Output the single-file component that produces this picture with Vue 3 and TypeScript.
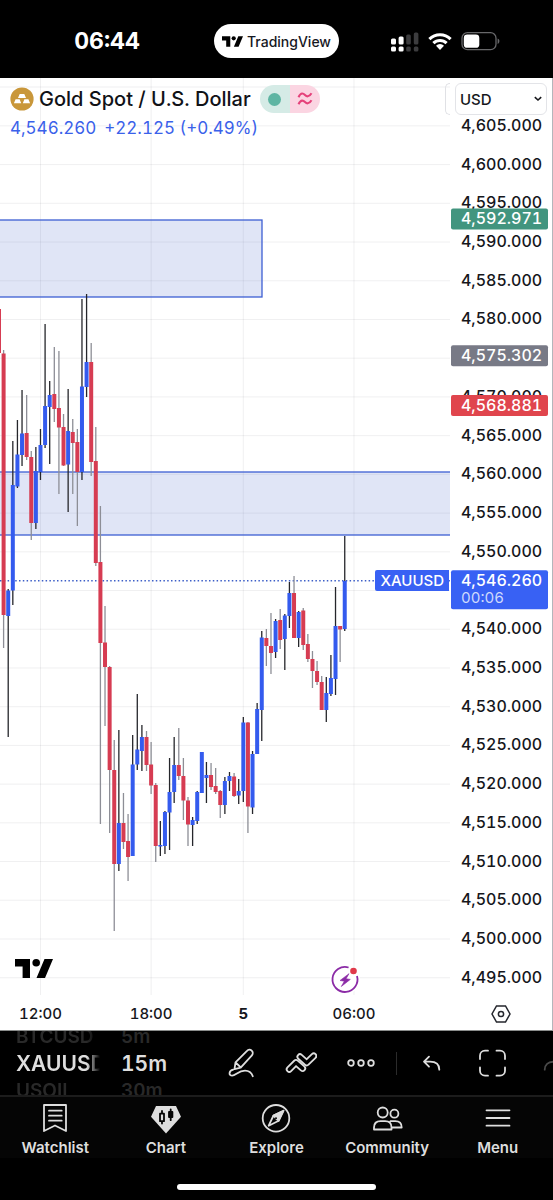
<script setup lang="ts">
import { ref } from 'vue'

type Candle = [high: number, bodyTop: number, bodyBottom: number, low: number, up: 0 | 1]

const currency = ref('USD')

// The plot starts below the status bar; vertical values are measured from the screen top.
const plotTop = 78
const priceToY = (price: number): number => 551.8 - (price - 4550) * 7.744 - plotTop

const firstX = 3.6
const step = 4.61
const candleX = (index: number): number => firstX + step * index

const candles: Candle[] = [
  [350, 353.5, 615, 648, 0], [589, 590.5, 616, 737, 1], [441, 485, 590.5, 605, 1], [420, 454.5, 486.5, 488, 1],
  [390, 433.5, 455, 466, 1], [395, 433, 457, 460, 0], [451, 457, 523, 540, 0], [447, 471, 523, 529, 1],
  [429, 445, 472, 480, 1], [324, 406, 445, 448, 1], [381, 395, 407, 464, 1], [347, 394, 409, 422, 0],
  [351, 408, 427.5, 494, 0], [414, 427, 465.5, 466, 0], [389, 431, 464.5, 512, 1], [419, 432, 443, 494, 0],
  [429, 442, 472, 526, 0], [299, 386.5, 472, 480, 1], [294, 362, 387, 397, 1], [343, 362, 462, 476, 0],
  [427, 461, 563, 566, 0], [506, 562, 643, 824, 0], [606, 642.5, 667, 726, 0], [666, 667, 770, 833, 0],
  [740, 770, 864, 931, 0], [730, 823, 864, 871, 1], [793, 823, 842, 849, 0], [814, 841, 857, 881, 0],
  [735, 764.5, 856, 856, 1], [694, 749.5, 764.5, 770, 1], [725, 737, 751, 771, 1], [731, 737, 765, 771, 0],
  [742, 764.5, 785.5, 794, 0], [783, 785, 846, 862, 0], [821, 845, 846.5, 856, 1], [811, 812, 846, 854, 1],
  [758, 792, 812.5, 850, 1], [737, 765, 792, 803, 1], [728, 765, 776, 780, 0], [758, 776, 800.5, 820, 0],
  [797, 800.5, 824.5, 846, 0], [817, 820, 825, 846, 1], [791, 792, 821, 824, 1], [752, 752, 793, 793, 1],
  [762, 775, 778, 803, 1], [763, 775, 787, 790, 0], [768, 786, 792, 794, 0], [790, 791, 805, 818, 0],
  [777, 781, 805, 814, 1], [772, 776, 781, 791, 1], [773, 776.5, 796, 797, 0], [779, 791, 795.5, 804, 1],
  [717, 722.5, 791, 802, 1], [722, 722.5, 806.5, 833, 0], [751, 754, 807.5, 814, 1], [703, 709, 754, 754, 1],
  [631, 637.5, 710, 741, 1], [629, 638, 646, 666, 0], [613, 646, 653, 674, 0], [619, 621, 652, 658, 1],
  [609, 620, 640, 649, 0], [614, 615.5, 639, 670, 1], [582, 593, 616, 628, 1], [576, 593, 638, 638, 0],
  [611, 612, 638, 647, 1], [608, 610.5, 645, 650, 0], [634, 644, 659, 662, 0], [651, 659, 671, 688, 0],
  [661, 671, 682, 685, 0], [676, 682, 710, 710, 0], [677, 693, 710, 722, 1], [655, 678, 694, 696, 1],
  [587, 626, 679, 695, 1], [626, 626, 629.5, 662, 0], [536, 581, 629, 631, 1],
]

const prices: number[] = Array.from({ length: 23 }, (_, i) => 4605 - i * 5)
// The 4,545 label is left out: the last-price badge takes its place.
const last = 4546.26
const labels = prices.filter((p) => p !== 4575 && p !== 4545)
const format = (value: number): string =>
  value.toLocaleString('en-US', { minimumFractionDigits: 3, maximumFractionDigits: 3 })

const times = [
  { label: '12:00', index: 8, bold: false },
  { label: '18:00', index: 32, bold: false },
  { label: '5', index: 52, bold: true },
  { label: '06:00', index: 76, bold: false },
]

const marks = [
  { price: 4592.971, fill: '#42957f' },
  { price: 4575.302, fill: '#787a86' },
  { price: 4568.881, fill: '#e0454d' },
]
</script>

<template>
  <div class="screen">
    <header class="status">
      <time class="clock">06:44</time>
      <div class="island">
        <svg width="21" height="11" viewBox="0 0 38 19" aria-hidden="true">
          <path d="M0 0h15v19H7.6V7.6H0z M29.5 0H38l-8 19h-8.5z" /><circle cx="21.2" cy="3.8" r="3.8" />
        </svg>
        <span>TradingView</span>
      </div>
      <div class="signals">
        <svg width="28" height="21" viewBox="0 0 28 21" aria-label="Mobile signal">
          <g fill="#fff">
            <rect x="0" y="7.5" width="5" height="6" rx="1.5" /><rect x="7.6" y="5.5" width="5" height="8" rx="1.5" />
            <rect x="0" y="15.5" width="5" height="5" rx="1.5" /><rect x="7.6" y="15.5" width="5" height="5" rx="1.5" />
          </g>
          <g fill="#3c3c3e">
            <rect x="15.2" y="3.5" width="4.6" height="10" rx="1.5" /><rect x="22.8" y="1.5" width="4.6" height="12" rx="1.5" />
            <rect x="15.2" y="15.5" width="4.6" height="5" rx="1.5" /><rect x="22.8" y="15.5" width="4.6" height="5" rx="1.5" />
          </g>
        </svg>
        <svg width="24" height="20" viewBox="0 0 24 20" aria-label="Wi-Fi">
          <g fill="none" stroke="#fff" stroke-width="3.1">
            <path d="M1.4 8.1a15.2 15.2 0 0 1 21.2 0" /><path d="M5.4 12.2a9.4 9.4 0 0 1 13.2 0" />
          </g>
          <path d="M8 14.7a5.8 5.8 0 0 1 8 0l-4 4.3z" fill="#fff" />
        </svg>
        <svg width="39" height="20" viewBox="0 0 39 20" aria-label="Battery">
          <rect x="1" y="1.7" width="34" height="17" rx="5.5" fill="none" stroke="#68686a" stroke-width="1.3" />
          <rect x="2.8" y="3.6" width="15.5" height="13.2" rx="3.4" fill="#fff" />
          <path d="M36.6 7.5c2.4.8 2.4 4.6 0 5.4z" fill="#68686a" />
        </svg>
      </div>
    </header>

    <main class="chart">
      <section class="plot">
        <svg class="canvas" role="img" aria-label="Gold Spot 15 minute candles">
          <g stroke="#2a2e39" stroke-opacity="0.07">
            <line x1="0" x2="100%" y1="9" y2="9" />
            <line v-for="p in prices" :key="p" x1="0" x2="100%" :y1="priceToY(p)" :y2="priceToY(p)" />
            <line v-for="t in times" :key="t.label" :x1="candleX(t.index)" :x2="candleX(t.index)" y1="0" y2="100%" />
          </g>
          <g fill="#4563c8" fill-opacity="0.17" stroke="#3d5fd3" stroke-width="1.3">
            <rect x="-4" y="142" width="266" height="77" />
            <rect class="zone" x="-4" y="394" height="63" />
          </g>
          <line x1="0" x2="100%" :y1="priceToY(last)" :y2="priceToY(last)" stroke="#3d5fc8" stroke-width="1.3" stroke-dasharray="1.5 2.3" />
          <g :transform="`translate(0 ${-plotTop})`">
            <rect x="-3" y="309" width="4" height="44" fill="#d63c52" />
            <g v-for="(c, i) in candles" :key="i">
              <line :x1="candleX(i)" :x2="candleX(i)" :y1="c[0]" :y2="c[3]" :stroke="c[4] ? '#25262b' : '#8d8e96'" stroke-width="1.3" />
              <rect :x="candleX(i) - 2" :y="c[1]" width="4" :height="c[2] - c[1]" :fill="c[4] ? '#345bee' : '#d63c52'" />
            </g>
          </g>
        </svg>

        <div class="legend">
          <div class="symbol">
            <svg width="24" height="24" viewBox="0 0 24 24" aria-hidden="true">
              <circle cx="12" cy="12" r="11.6" fill="#c9973a" />
              <path d="M9.7 7h4.600l1.700 4H8zM5.600 12.300h4l1.600 3.900H3.900zM14.400 12.300h4l1.700 3.900h-7.300z" fill="#fff" />
            </svg>
            <h1>Gold Spot / U.S. Dollar</h1>
            <span class="flags">
              <span class="open"><i></i></span>
              <span class="approx">
                <svg width="16" height="14" viewBox="0 0 16 14" fill="none" stroke="#e5437b" stroke-width="2.1" aria-hidden="true">
                  <path d="M1.500 5.200C4-.2 6.500 1.500 8 3s4 2.600 6.500-1.700M1.500 12.200C4 7 6.500 8.500 8 10s4 2.600 6.500-1.700" />
                </svg>
              </span>
            </span>
          </div>
          <p class="quote"><span>4,546.260</span><span>+22.125 (+0.49%)</span></p>
        </div>
        <div class="edge"></div>
        <span class="ticker">XAUUSD</span>
        <svg class="brand" width="38" height="19" viewBox="0 0 38 19" aria-label="TradingView">
          <path d="M0 0h15v19H7.600V7.600H0z M29.500 0H38l-8 19h-8.500z" /><circle cx="21.200" cy="3.800" r="3.800" />
        </svg>
        <button class="flash" aria-label="Events">
          <svg width="30" height="30" viewBox="0 0 30 30">
            <circle cx="15" cy="15.500" r="15" fill="#fff" />
            <path d="M18.600 3.500A12.500 12.500 0 1 0 27 12" fill="none" stroke="#8b2ba6" stroke-width="1.800" />
            <path d="M19 9.700L10 16.500l4.300.7-3 5.300L20.300 15.400l-4.200-.7z" fill="#8b2ba6" stroke="#8b2ba6" stroke-width=".6" stroke-linejoin="round" />
            <circle cx="23.500" cy="7" r="3.300" fill="#e0394a" />
          </svg>
        </button>
      </section>

      <aside class="axis">
        <svg class="canvas" aria-label="Price scale">
          <text v-for="p in labels" :key="p" class="price" x="11" :y="priceToY(p) + 5">{{ format(p) }}</text>
          <g v-for="m in marks" :key="m.price">
            <rect x="1" :y="priceToY(m.price) - 10.500" width="97" height="21" rx="2" :fill="m.fill" />
            <text class="price light" x="11" :y="priceToY(m.price) + 5">{{ format(m.price) }}</text>
          </g>
          <rect x="1" :y="priceToY(last) - 10.500" width="97" height="39" rx="2" fill="#3861f4" />
          <text class="price light" x="11" :y="priceToY(last) + 5">{{ format(last) }}</text>
          <text class="count" x="11" :y="priceToY(last) + 22">00:06</text>
        </svg>
        <label class="currency">
          <select v-model="currency" aria-label="Currency">
            <option>USD</option>
          </select>
          <svg width="8" height="6" viewBox="0 0 8 6" fill="none" stroke="#16171b" stroke-width="1.600" aria-hidden="true"><path d="M.8 1.200 4 4l3.200-2.800" /></svg>
        </label>
      </aside>

      <svg class="times" aria-label="Time scale">
        <text v-for="t in times" :key="t.label" :class="{ bold: t.bold }" :x="candleX(t.index)" y="24">{{ t.label }}</text>
      </svg>
      <button class="settings" aria-label="Scale settings">
        <svg width="20" height="20" viewBox="0 0 20 20" fill="none" stroke="#24262d" stroke-width="1.500">
          <path d="M5.500 2h9L19 10l-4.500 8h-9L1 10z" /><circle cx="10" cy="10" r="2.600" />
        </svg>
      </button>
    </main>

    <section class="toolbar">
      <div class="wheel symbols"><span>BTCUSD</span><strong>XAUUSD</strong><span>USOIL</span></div>
      <div class="wheel frames"><span>5m</span><strong>15m</strong><span>30m</span></div>
      <button aria-label="Draw">
        <svg class="icon" viewBox="0 0 32 32">
          <path d="M9.500 22.200l1-6.800L22 3.800a3.300 3.300 0 0 1 4.900 4.500L15.700 20.600zM10.800 15.600l5 4.900" />
          <path d="M8.200 22.700c-4.600 1-4.800 6-1 6 3.300 0 6.300-5 12.800-5 4 0 6.500 2 7.800 5.500" />
        </svg>
      </button>
      <button aria-label="Indicators">
        <svg class="icon" viewBox="0 0 32 32">
          <path class="thick" d="M4.300 22.200l6.700-6.600 6.600 5.800" /><path class="hollow" d="M4.300 22.200l6.700-6.600 6.600 5.800" />
          <path class="thick" d="M15 9.800l6.700 6 7-6.800" /><path class="hollow" d="M15 9.800l6.700 6 7-6.800" />
        </svg>
      </button>
      <button aria-label="More">
        <svg class="icon" viewBox="0 0 32 32"><circle cx="6" cy="16" r="2.800" /><circle cx="16" cy="16" r="2.800" /><circle cx="26" cy="16" r="2.800" /></svg>
      </button>
      <span class="divider"></span>
      <button aria-label="Undo">
        <svg class="icon" viewBox="0 0 32 32"><path d="M13 9.700l-5 5 5 5M8.500 14.700h5.500c6 0 9.300 3 9.300 8" /></svg>
      </button>
      <button aria-label="Full screen">
        <svg class="icon" viewBox="0 0 32 32"><path d="M4 12V8.700a5 5 0 0 1 5-5h3M20.500 3.700h3.500a5 5 0 0 1 5 5V12M29 20.500v3.200a5 5 0 0 1-5 5h-3.500M12 28.700H9a5 5 0 0 1-5-5v-3.200" /></svg>
      </button>
      <button class="dim" aria-label="Redo">
        <svg class="icon" viewBox="0 0 32 32"><path d="M19 9.700l5 5-5 5M23.500 14.700H18c-6 0-9.300 3-9.300 8" /></svg>
      </button>
    </section>

    <nav class="tabs">
      <a href="#watchlist">
        <svg class="icon" viewBox="0 0 32 32"><path d="M5 3h22v26l-11-5.500L5 29zM10 8.700h12.700M10 13.700h12.700M10 18.700h12.700" /></svg>
        Watchlist
      </a>
      <a href="#chart">
        <svg class="icon" viewBox="0 0 32 32">
          <path d="M6 4h20l5 10.700L16 31.500 1 14.700z" fill="#dedede" stroke="none" />
          <g stroke="#050505" stroke-width="1.800"><path d="M10 11.700h4v7.500h-4zM12 9v2.500M12 19.200v2.300M20.700 7.500v10.700" /><path d="M19 10h3.400v5H19z" fill="#050505" /></g>
        </svg>
        Chart
      </a>
      <a href="#explore">
        <svg class="icon" viewBox="0 0 32 32">
          <circle cx="16" cy="16.300" r="13.300" /><path d="M23.500 8.700l-4.800 10-10 5 4.800-10.200z" /><path d="M23.500 8.700l-10 4.800 2.500 3 2.700 2.200z" fill="#dedede" /><circle cx="16" cy="16.300" r="1" fill="#050505" stroke="none" />
        </svg>
        Explore
      </a>
      <a href="#community">
        <svg class="icon" viewBox="0 0 32 32">
          <circle cx="11.700" cy="10.500" r="5" /><circle cx="23.400" cy="11.700" r="4" />
          <path d="M3 27.500h17.500v-2c0-3.800-2.500-6.300-6.500-6.300H9.500c-4 0-6.500 2.500-6.500 6.300zM19.500 19.200h4.700c4 0 6.500 2.300 6.500 6.300h-10" />
        </svg>
        Community
      </a>
      <a href="#menu">
        <svg class="icon" viewBox="0 0 32 32"><path d="M4.500 8.300h23M4.500 16h23M4.500 23.700h23" /></svg>
        Menu
      </a>
    </nav>
    <div class="home"></div>
  </div>
</template>

<style>
body {
  margin: 0;
  background: #000;
}
</style>

<style scoped>
.screen {
  font-family: Inter, "Liberation Sans", sans-serif;
  font-variant-numeric: tabular-nums;
  color: #111217;
  background: #000;
  overflow: hidden;
}
button {
  border: 0;
  padding: 0;
  background: none;
  font: inherit;
}
svg {
  display: block;
}
.status {
  display: grid;
  grid-template-columns: 1fr auto 1fr;
  align-items: center;
  height: 78px;
  padding-top: 4px;
  box-sizing: border-box;
  color: #fff;
}
.clock {
  justify-self: center;
  font-size: 23px;
  line-height: 32px;
  font-weight: 700;
}
.island {
  display: flex;
  align-items: center;
  gap: 4px;
  box-sizing: border-box;
  height: 34px;
  padding: 0 8px;
  border-radius: 17px;
  background: #fff;
  color: #16181f;
  font-size: 14px;
  font-weight: 500;
}
.signals {
  display: flex;
  gap: 9px;
  justify-self: center;
}
.chart {
  display: grid;
  grid-template-columns: minmax(0, 1fr) 102px;
  background: #fff;
  border-right: 1px solid #b4b6bb;
  border-bottom: 1px solid #8a8c8b;
  box-sizing: border-box;
}
.plot,
.axis {
  position: relative;
}
.canvas {
  width: 100%;
  height: 917px;
}
.zone {
  width: calc(100% + 8px);
}
.legend {
  position: absolute;
  top: 7px;
  left: 10px;
}
.symbol {
  display: flex;
  align-items: center;
}
h1 {
  margin: 0 9px 0 5px;
  font-size: 20px;
  line-height: 28px;
  font-weight: 500;
  white-space: nowrap;
}
.flags {
  display: flex;
  height: 28px;
  border-radius: 14px;
  overflow: hidden;
}
.flags span {
  display: grid;
  place-items: center;
  width: 30px;
}
.open {
  background: #d5ebe6;
}
.open i {
  width: 13px;
  height: 13px;
  border-radius: 50%;
  background: #5eb5a3;
}
.approx {
  background: #fbd5e2;
}
.quote {
  display: flex;
  gap: 8px;
  margin: 5px 0 0;
  font-size: 17px;
  line-height: 20px;
  color: #3a61ea;
  white-space: nowrap;
}
.edge {
  position: absolute;
  top: 5px;
  right: 0;
  width: 4px;
  height: 30px;
  border: 1px solid #e0e1e5;
  border-right: 0;
  border-radius: 6px 0 0 6px;
}
.ticker {
  position: absolute;
  top: 492px;
  right: 1px;
  padding: 0 5px;
  border-radius: 2px 0 0 2px;
  background: #3861f4;
  color: #fff;
  font-size: 15px;
  line-height: 21px;
  font-weight: 500;
}
.brand {
  position: absolute;
  left: 15px;
  bottom: 17px;
}
.flash {
  position: absolute;
  left: 330px;
  bottom: 1px;
}
.price {
  font-size: 16px;
  font-weight: 500;
  fill: #16171c;
}
.price.light {
  fill: #fff;
}
.count {
  font-size: 15px;
  fill: #cfdafc;
}
.currency {
  position: absolute;
  top: 5px;
  left: 5px;
  right: 5px;
  display: flex;
  align-items: center;
  height: 32px;
  box-sizing: border-box;
  padding: 0 4px;
  border: 1px solid #e3e4e8;
  border-radius: 6px;
  background: #fff;
}
select {
  flex: 1;
  appearance: none;
  border: 0;
  padding: 0;
  background: none;
  font: 500 15px Inter, sans-serif;
  color: #16171c;
}
.times {
  width: 100%;
  height: 35px;
}
.times text {
  font-size: 15px;
  font-weight: 500;
  text-anchor: middle;
  fill: #16171c;
}
.times .bold {
  font-weight: 700;
}
.settings {
  display: grid;
  place-items: center;
  padding-top: 3px;
}
.toolbar {
  display: flex;
  align-items: center;
  height: 66px;
  overflow: hidden;
  border-bottom: 2px solid #1c1c1c;
  box-sizing: border-box;
  color: #dedede;
}
.toolbar button {
  flex: 0 0 60px;
  display: grid;
  place-items: center;
  color: inherit;
}
.toolbar .dim {
  color: #4a4a4a;
}
.wheel {
  display: flex;
  flex: none;
  flex-direction: column;
  line-height: 27px;
}
.wheel span {
  font-size: 19px;
  font-weight: 600;
  color: #292929;
}
.wheel strong {
  font-size: 21px;
  font-weight: 600;
}
.symbols {
  width: 84px;
  margin-left: 16px;
  overflow: hidden;
  mask-image: linear-gradient(90deg, #000 84%, transparent);
}
.frames {
  width: 90px;
  margin-left: 21px;
}
.divider {
  flex: none;
  width: 1px;
  height: 23px;
  margin: 0 5px;
  background: #2b2b2b;
}
.icon {
  width: 32px;
  height: 32px;
  fill: none;
  stroke: currentColor;
  stroke-width: 1.8;
  stroke-linejoin: round;
  stroke-linecap: round;
}
.thick {
  stroke-width: 7;
}
.hollow {
  stroke: #000;
  stroke-width: 3.4;
}
.tabs {
  display: grid;
  grid-template-columns: repeat(5, 1fr);
  padding-top: 5px;
  background: #050505;
}
.tabs a {
  display: flex;
  flex-direction: column;
  align-items: center;
  gap: 4px;
  color: #dedede;
  font-size: 15px;
  line-height: 20px;
  font-weight: 600;
  text-decoration: none;
}
.home {
  width: 36%;
  height: 6px;
  margin: 26px auto 10px;
  border-radius: 3px;
  background: #fff;
}
</style>
